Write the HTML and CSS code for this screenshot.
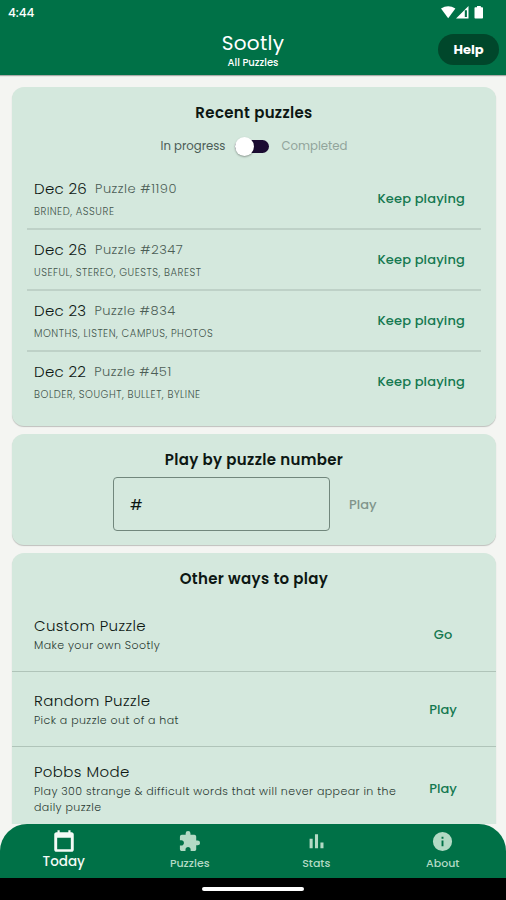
FILE: index.html
```html
<!DOCTYPE html>
<html lang="en">
<head>
<meta charset="utf-8">
<title>Sootly</title>
<link rel="stylesheet" href="styles.css">
</head>
<body>
<div class="app">
  <header class="top">
    <div class="status">
      <span class="clock">4:44</span>
      <svg class="signals" width="44" height="14" viewBox="0 0 44 14" fill="#fff">
        <path d="M0 2.6Q7.2-2 14.4 2.6L7.2 12.2Z"/>
        <path d="M27.5 0V12.5H15ZM25.9 4.2H23.8V11H25.9Z" fill-rule="evenodd"/>
        <path d="M36 0h3.800v1.200h1.400q.8 0 .8.8v9.800q0 .7-.8.7h-6.900q-.8 0-.8-.7V2q0-.8.8-.8H36Z"/>
      </svg>
    </div>
    <div class="titlebar">
      <div class="brand">
        <h1>Sootly</h1>
        <p>All Puzzles</p>
      </div>
      <button class="help">Help</button>
    </div>
  </header>

  <main class="content">
    <section class="card recent">
      <h2>Recent puzzles</h2>
      <div class="filter">
        <span class="on">In progress</span>
        <span class="switch"></span>
        <span class="off">Completed</span>
      </div>
      <ul class="list">
        <li><div><p class="line"><span class="date">Dec 26</span><span class="num">Puzzle #1190</span></p><p class="words">BRINED, ASSURE</p></div><a class="action">Keep playing</a></li>
        <li><div><p class="line"><span class="date">Dec 26</span><span class="num">Puzzle #2347</span></p><p class="words">USEFUL, STEREO, GUESTS, BAREST</p></div><a class="action">Keep playing</a></li>
        <li><div><p class="line"><span class="date">Dec 23</span><span class="num">Puzzle #834</span></p><p class="words">MONTHS, LISTEN, CAMPUS, PHOTOS</p></div><a class="action">Keep playing</a></li>
        <li><div><p class="line"><span class="date">Dec 22</span><span class="num">Puzzle #451</span></p><p class="words">BOLDER, SOUGHT, BULLET, BYLINE</p></div><a class="action">Keep playing</a></li>
      </ul>
    </section>

    <section class="card bynumber">
      <h2>Play by puzzle number</h2>
      <div class="entry">
        <div class="field">#</div>
        <span class="play">Play</span>
      </div>
    </section>

    <section class="card other">
      <h2>Other ways to play</h2>
      <div class="mode"><div class="about"><h3>Custom Puzzle</h3><p>Make your own Sootly</p></div><a class="action">Go</a></div>
      <div class="mode"><div class="about"><h3>Random Puzzle</h3><p>Pick a puzzle out of a hat</p></div><a class="action">Play</a></div>
      <div class="mode tall"><div class="about"><h3>Pobbs Mode</h3><p>Play 300 strange &amp; difficult words that will never appear in the<br>daily puzzle</p></div><a class="action">Play</a></div>
    </section>
  </main>

  <footer class="bottom">
    <nav class="tabs">
      <a class="tab active">
        <svg width="26" height="26" viewBox="0 0 24 24"><path d="M19 4h-1V2h-2v2H8V2H6v2H5c-1.110 0-2 .9-2 2v14c0 1.100.89 2 2 2h14c1.100 0 2-.9 2-2V6c0-1.100-.9-2-2-2zm-.7 15.700H5.700V9h12.600v10.700z"/></svg>
        <span>Today</span>
      </a>
      <a class="tab">
        <svg width="23" height="23" viewBox="0 0 24 24"><path d="M20.500 11H19V7c0-1.100-.9-2-2-2h-4V3.500a2.500 2.500 0 0 0-5 0V5H4c-1.100 0-1.990.9-1.990 2v3.800H3.500c1.490 0 2.700 1.210 2.700 2.700s-1.210 2.700-2.700 2.700H2V20c0 1.100.9 2 2 2h3.800v-1.500c0-1.490 1.210-2.700 2.700-2.700s2.700 1.210 2.700 2.700V22H17c1.100 0 2-.9 2-2v-4h1.500a2.500 2.500 0 0 0 0-5z"/></svg>
        <span>Puzzles</span>
      </a>
      <a class="tab">
        <svg width="23" height="23" viewBox="0 0 24 24"><path d="M4.800 9.200h3.200V19H4.800zM10.400 4.500h3.200V19h-3.200zm5.700 8.500h3.200v6h-3.200z"/></svg>
        <span>Stats</span>
      </a>
      <a class="tab">
        <svg width="23" height="23" viewBox="0 0 24 24"><path d="M12 2a10 10 0 1 0 0 20 10 10 0 0 0 0-20zm1 15h-2v-6h2v6zm0-8h-2V7h2v2z"/></svg>
        <span>About</span>
      </a>
    </nav>
    <div class="home"><i></i></div>
  </footer>
</div>
</body>
</html>
```
FILE: styles.css
```css
* { box-sizing: border-box; margin: 0; padding: 0; }
body { background: #f4f5f2; font-family: Poppins, Inter, "Open Sans", sans-serif; color: #0d1713; }
.app { width: 506px; height: 900px; display: flex; flex-direction: column; overflow: hidden; }

.top { flex: none; height: 75px; background: #007147; color: #fff; box-shadow: 0 1px 1px rgba(0,0,0,.3); }
.status { height: 31px; padding: 6px 25px 0 8px; display: flex; justify-content: space-between; align-items: flex-start; }
.clock { font-size: 12px; line-height: 14px; font-weight: 500; }
.signals { margin-right: -4px; }
.titlebar { height: 44px; display: grid; grid-template-columns: 1fr auto 1fr; align-items: start; }
.brand { grid-column: 2; text-align: center; }
.brand h1 { font-size: 20px; line-height: 25px; font-weight: 400; letter-spacing: .3px; }
.brand p { font-size: 10px; line-height: 14px; font-weight: 500; }
.help { justify-self: end; margin: 3px 7px 0 0; width: 61px; height: 31px; border: 0; border-radius: 16px; background: #00472b; color: #fff; font: inherit; font-size: 13px; font-weight: 700; }

.content { flex: 1; min-height: 0; overflow: hidden; padding: 12px 10px 0 12px; }
.card { background: #d4e8dd; border-radius: 12px; margin-bottom: 8px; box-shadow: 0 1px 1px rgba(0,0,0,.22); }
.card h2 { font-size: 15px; line-height: 20px; font-weight: 600; letter-spacing: .33px; text-align: center; }
.recent { height: 339px; padding: 16px 15px 0; }
.filter { height: 20px; margin-top: 13px; display: flex; align-items: center; justify-content: center; font-size: 11.700px; }
.on { color: #4b5c55; }
.off { color: #91a49b; }
.switch { width: 34px; height: 13px; border-radius: 7px; background: #1b0c32; margin: 0 12px 0 10px; position: relative; }
.switch::after { content: ""; position: absolute; left: 0; top: -3px; width: 19px; height: 19px; border-radius: 50%; background: #fff; box-shadow: 0 1px 2px rgba(0,0,0,.35); }
.list { list-style: none; margin-top: 11px; }
.list li { height: 61px; padding: 10px 16px 0 7px; display: flex; justify-content: space-between; }
.list li + li { border-top: 2px solid #bed1c7; padding-top: 8px; }
.line { height: 23px; display: flex; align-items: center; gap: 8px; }
.date { font-size: 15px; font-weight: 300; letter-spacing: .3px; }
.num { font-size: 13px; font-weight: 300; letter-spacing: .5px; color: #4c5e56; }
.words { font-size: 10px; line-height: 20px; margin-top: 2px; font-weight: 300; letter-spacing: .53px; color: #42544b; }
.action { color: #157850; font-size: 13px; font-weight: 500; }
.list .action { line-height: 18px; margin-top: 13px; letter-spacing: .15px; }

.bynumber { height: 111px; padding-top: 16px; }
.entry { display: flex; align-items: center; margin: 7px 0 0 101px; }
.field { width: 217px; height: 54px; border: 1px solid #71877c; border-radius: 4px; padding: 0 16px; font-size: 15px; line-height: 53px; }
.play { margin-left: 19px; padding-top: 1px; font-size: 13px; font-weight: 500; color: #81958b; }

.other { height: 300px; padding-top: 16px; }
.mode { height: 75px; padding-left: 22px; display: flex; align-items: center; }
.mode:first-of-type { margin-top: 7px; }
.mode + .mode { border-top: 1px solid #b0c4b9; }
.mode.tall { height: 83px; }
.about { width: 370px; white-space: nowrap; }
.about h3 { font-size: 15px; line-height: 22px; font-weight: 300; letter-spacing: .38px; }
.about p { font-size: 11px; line-height: 16px; font-weight: 300; letter-spacing: .42px; color: #2a3a32; }
.mode .action { width: 78px; padding-top: 2px; text-align: center; }

.bottom { flex: none; height: 76px; background: linear-gradient(#f4f5f2 0 50%, #000 50%); }
.tabs { height: 54px; background: #007147; border-radius: 27px 27px 0 0; display: grid; grid-template-columns: repeat(4, 1fr); }
.tab { display: flex; flex-direction: column; align-items: center; padding-top: 6px; color: #b3dac5; }
.tab svg { fill: currentColor; }
.tab span { font-size: 11px; line-height: 14px; font-weight: 500; margin-top: 3px; }
.tab.active { color: #f3faf6; padding: 4px 0 0 1px; }
.tab.active span { font-size: 13.500px; line-height: 16px; margin-top: 0; }
.home { height: 22px; display: flex; align-items: center; justify-content: center; background: #000; }
.home i { width: 102px; height: 4px; border-radius: 2px; background: #fff; }
```
